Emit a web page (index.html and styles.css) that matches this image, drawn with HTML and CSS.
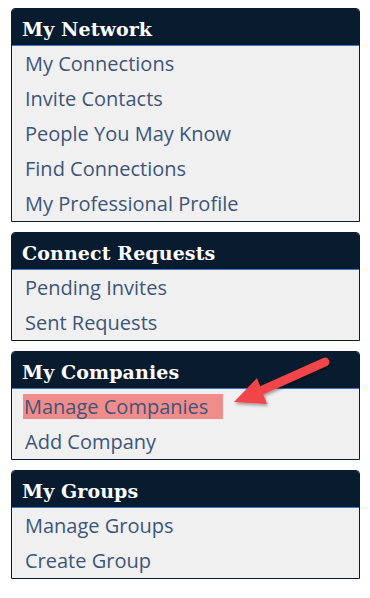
FILE: index.html
```html
<!DOCTYPE html>
<html>
<head>
<meta charset="utf-8">
<link rel="stylesheet" href="styles.css">
</head>
<body>
<div class="page">
  <div class="panel">
    <div class="head">My Network</div>
    <ul class="list">
      <li>My Connections</li>
      <li>Invite Contacts</li>
      <li>People You May Know</li>
      <li>Find Connections</li>
      <li>My Professional Profile</li>
    </ul>
  </div>
  <div class="panel">
    <div class="head">Connect Requests</div>
    <ul class="list">
      <li>Pending Invites</li>
      <li>Sent Requests</li>
    </ul>
  </div>
  <div class="panel">
    <div class="head">My Companies</div>
    <ul class="list">
      <li><span class="hl">Manage Companies</span></li>
      <li>Add Company</li>
    </ul>
  </div>
  <div class="panel">
    <div class="head">My Groups</div>
    <ul class="list">
      <li>Manage Groups</li>
      <li>Create Group</li>
    </ul>
  </div>
  <svg class="arrow" width="370" height="598" viewBox="0 0 370 598">
    <defs>
      <filter id="sh" x="-20%" y="-20%" width="140%" height="140%">
        <feDropShadow dx="1" dy="2" stdDeviation="1.5" flood-color="#000" flood-opacity="0.35"/>
      </filter>
    </defs>
    <g filter="url(#sh)">
      <line x1="325" y1="362" x2="258" y2="392" stroke="#f2454a" stroke-width="9" stroke-linecap="round"/>
      <polygon points="234,402 257,378 267,404" fill="#f2454a"/>
    </g>
  </svg>
</div>
</body>
</html>
```
FILE: styles.css
```css
html, body {
  margin: 0;
  padding: 0;
  background: #ffffff;
}
.page {
  position: relative;
  padding: 8px 10px 0 11px;
  display: flex;
  flex-direction: column;
  gap: 10px;
}
.panel {
  border: 1px solid #0b1a2b;
  border-radius: 4px 4px 0 0;
  background: #f0f0f0;
  overflow: hidden;
}
.head {
  background: #081b2f;
  color: #ffffff;
  font-family: "DejaVu Serif", serif;
  font-weight: bold;
  font-size: 19px;
  height: 36px;
  line-height: 40px;
  padding-left: 10px;
  border-bottom: 1px solid #3a78bf;
  letter-spacing: 0.1px;
}
.list {
  list-style: none;
  margin: 0;
  padding: 0;
}
.list li {
  font-family: "Open Sans", sans-serif;
  font-size: 20px;
  color: #3d5678;
  height: 35px;
  line-height: 35px;
  padding-left: 13px;
}
.hl {
  background: #f08c8c;
  display: inline-block;
  line-height: 25px;
  padding: 0 15px 0 1px;
  margin-left: -2px;
}
.arrow {
  position: absolute;
  left: 0;
  top: 0;
  pointer-events: none;
}
```
